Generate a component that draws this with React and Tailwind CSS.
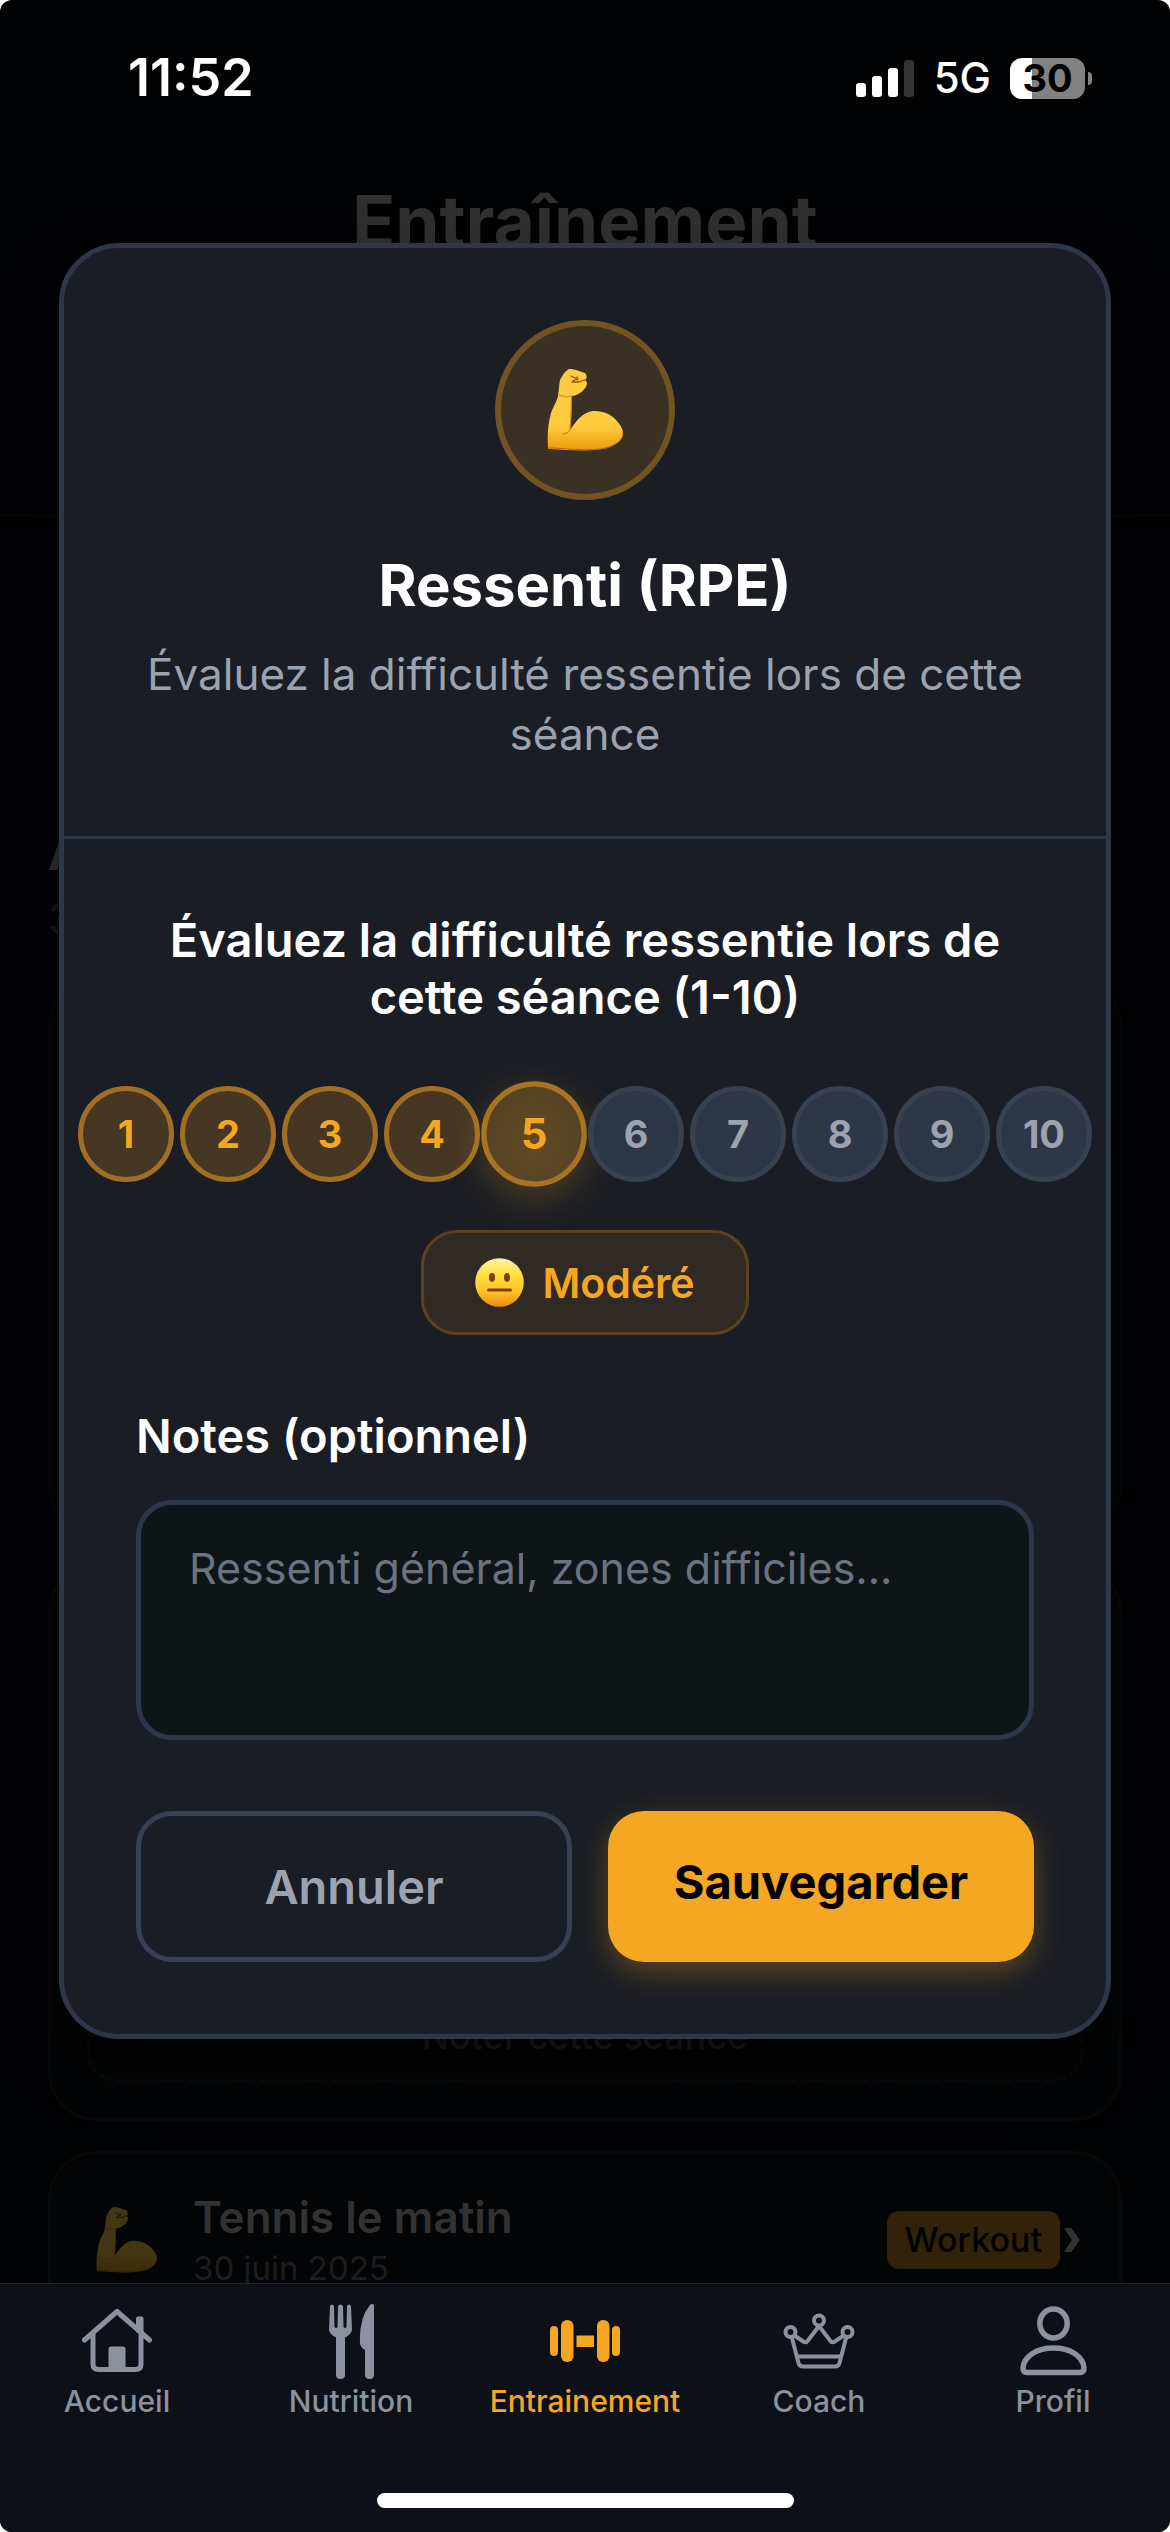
import React, { useState } from "react";

function StatusBar() {
  return (
    <div className="flex h-[156px] items-center justify-between pr-[78px] pl-[128px] text-white">
      <span className="text-[52px] leading-[60px] font-semibold">11:52</span>
      <div className="flex items-center gap-[19px]">
        <svg width="59" height="38" viewBox="0 0 59 38" fill="#fff" aria-hidden="true">
          <rect x="0" y="24" width="10" height="14" rx="3" />
          <rect x="16" y="17" width="10" height="21" rx="3" />
          <rect x="32" y="9" width="10" height="29" rx="3" />
          <rect x="48" y="1" width="10" height="37" rx="3" fill="#343435" />
        </svg>
        <span className="text-[42px] leading-[48px] font-medium">5G</span>
        <div className="flex items-center gap-[3px]">
          <div className="flex h-[41px] w-[75px] items-center justify-center rounded-[12px] bg-linear-to-r from-white from-30% to-[#828282] to-30% text-[38px] leading-[41px] font-bold text-black">
            30
          </div>
          <div className="h-[13px] w-[4px] rounded-r-full bg-[#828282]" />
        </div>
      </div>
    </div>
  );
}

function FlexedArm({ className }) {
  return (
    <svg className={className} viewBox="0 0 76 82" aria-hidden="true">
      <defs>
        <linearGradient id="arm" x1="0" y1="0" x2="0" y2="1">
          <stop offset="0" stopColor="#ffcb45" />
          <stop offset="0.7" stopColor="#ffcc3f" />
          <stop offset="1" stopColor="#e99a0c" />
        </linearGradient>
      </defs>
      <path
        d="M1 79 C0 68 1 54 4 44 C7 36 10 32 11 27 C12 21 12 15 13 11 C15 7 18 2 22 0 C28 -0.5 33 3 38 4 C40 6 40 9 38.500 11 L40 14 C40 18 36 22 33 24 C30 26 27 27 24.500 27 C24.500 38 24 50 23 61 C29 52 36 43 46 42 C60 41 72 50 76 62 C77 71 69 76 59 79 C43 83 20 81 4 80 C2 80 1 80 1 79 Z"
        fill="url(#arm)"
      />
      <path d="M2 79 C18 79 42 83 59 79 C69 76 77 71 76 62" fill="none" stroke="#b86b06" strokeWidth="1" />
      <path d="M24.500 27 C24.500 40 24 50 23 61 C21 64 18 65 15 65" fill="none" stroke="#d48a12" strokeWidth="1.2" />
      <path d="M12 26 C16 28 21 28 25 27" fill="none" stroke="#e09a1c" strokeWidth="1.5" />
      <path d="M24 7 L30 10 L26 12 M30 8 L31 11 M25 13 L32 13 L39 10.500" fill="none" stroke="#955307" strokeWidth="1.3" strokeLinecap="round" strokeLinejoin="round" />
    </svg>
  );
}

function NeutralFace() {
  return (
    <svg className="size-[49px]" viewBox="0 0 49 49" aria-hidden="true">
      <defs>
        <linearGradient id="face" x1="0" y1="0" x2="0" y2="1">
          <stop offset="0" stopColor="#fff5a8" />
          <stop offset="0.35" stopColor="#ffdf3c" />
          <stop offset="0.7" stopColor="#ffc02a" />
          <stop offset="1" stopColor="#f08a0c" />
        </linearGradient>
      </defs>
      <circle cx="24.5" cy="24.5" r="24.3" fill="url(#face)" />
      <ellipse cx="17" cy="19.5" rx="3" ry="4.4" fill="#7a4306" />
      <ellipse cx="32" cy="19.5" rx="3" ry="4.4" fill="#7a4306" />
      <rect x="12" y="30.5" width="25" height="3" rx="1.5" fill="#7a4306" />
    </svg>
  );
}

const icons = {
  home: (
    <svg width="70" height="64" viewBox="0 0 70 64" fill="none" stroke="currentColor" strokeWidth="5" strokeLinecap="round" strokeLinejoin="round" aria-hidden="true">
      <path d="M2.5 31 L35 2.500 L67.500 31" />
      <path d="M11 24 V55 Q11 60.500 16.500 60.500 H53.500 Q59 60.500 59 55 V24" />
      <path d="M54 23 V9.500 Q54 7.500 56 7.500 H59.500 Q61.500 7.500 61.500 9.500 V27 Z" fill="currentColor" stroke="none" />
      <path d="M26.500 61 V40 Q26.500 37.500 29 37.500 H41 Q43.500 37.500 43.500 40 V61 Z" fill="currentColor" stroke="none" />
    </svg>
  ),
  food: (
    <svg width="45" height="75" viewBox="0 0 45 75" fill="currentColor" aria-hidden="true">
      <path d="M1 2 Q3 -1 5 2 L5.500 23 Q7 25 8.500 23 L9 2 Q11.500 -1 14 2 L14.500 23 Q16 25 17.500 23 L18 2 Q20 -1 22 2 L23 26 Q22 31 16 33.500 V71 Q16 75 11.500 75 Q7 75 7 71 V33.500 Q1 31 0 26 Z" />
      <path d="M45 1 V71 Q45 75 40.500 75 Q36 75 36 71 V46 Q31 43 31 39 Q30 14 41 1 Q43 -1 45 1 Z" />
    </svg>
  ),
  dumbbell: (
    <svg width="70" height="42" viewBox="0 0 70 42" fill="currentColor" aria-hidden="true">
      <rect x="0" y="6" width="8" height="30" rx="4" />
      <rect x="11" y="0" width="12.500" height="42" rx="6" />
      <rect x="26.500" y="15.500" width="17.500" height="11.500" />
      <rect x="47" y="0" width="12.500" height="42" rx="6" />
      <rect x="62" y="6" width="8" height="30" rx="4" />
    </svg>
  ),
  crown: (
    <svg width="72" height="56" viewBox="0 0 72 56" fill="none" stroke="currentColor" strokeWidth="4" strokeLinejoin="round" aria-hidden="true">
      <circle cx="7.500" cy="19" r="5" />
      <circle cx="36" cy="7.500" r="5" />
      <circle cx="64.500" cy="19" r="5" />
      <path d="M9 25 L15.500 50 Q16.500 53.500 20 53.500 H52 Q55.500 53.500 56.500 50 L63 25" />
      <path d="M12 23 L21 29 Q23.500 30 25 27.500 L36 13 L47 27.500 Q48.500 30 51 29 L60 23" />
      <path d="M14.500 43.500 H57.500" />
    </svg>
  ),
  person: (
    <svg width="67" height="70" viewBox="0 0 67 70" fill="none" stroke="currentColor" strokeWidth="5.500" aria-hidden="true">
      <ellipse cx="33.500" cy="17.500" rx="13.700" ry="14.500" />
      <path d="M7 66.500 Q3 66.500 3 62 C4 50 17 42 33.500 42 C50 42 63 50 64 62 Q64 66.500 60 66.500 Z" />
    </svg>
  ),
};

const tabs = [
  { label: "Accueil", icon: "home" },
  { label: "Nutrition", icon: "food" },
  { label: "Entrainement", icon: "dumbbell", active: true },
  { label: "Coach", icon: "crown" },
  { label: "Profil", icon: "person" },
];

function TabBar() {
  return (
    <nav className="absolute inset-x-0 bottom-0 border-t border-[#23272d] bg-[#0d1117]">
      <ul className="grid grid-cols-5 pt-[17px]">
        {tabs.map((t) => (
          <li key={t.label}>
            <a
              href="#"
              aria-current={t.active ? "page" : undefined}
              className={
                "flex flex-col items-center text-[30px] leading-[36px] font-medium " +
                (t.active ? "text-[#f5a623]" : "text-[#8b929e]")
              }
            >
              <span className="flex h-[80px] items-center">{icons[t.icon]}</span>
              <span className="mt-[2px]">{t.label}</span>
            </a>
          </li>
        ))}
      </ul>
      <div className="mx-auto mt-[74px] mb-[24px] h-[15px] w-[417px] rounded-full bg-white" />
    </nav>
  );
}

function DimmedPage() {
  return (
    <div className="flex grow flex-col" aria-hidden="true">
      <header className="h-[361px] border-b-3 border-[#090603]">
        <p className="pt-[20px] text-center text-[71px] leading-[90px] font-bold text-[#303030]">Entraînement</p>
      </header>
      <div className="flex flex-col px-12 pt-[306px]">
        <p className="text-[48px] leading-[60px] font-bold text-[#303030]">Activités</p>
        <p className="mt-[12px] text-[42px] leading-[48px] text-[#1a1a1b]">3</p>
        <div className="mt-[34px] flex h-[557px] rounded-[48px] border-3 border-[#060708] bg-[#030405]" />
        <div className="mt-[30px] flex h-[557px] flex-col justify-end rounded-[48px] border-3 border-[#070809] bg-[#030405] p-[36px]">
          <p className="rounded-[30px] border-3 border-dashed border-[#090a0b] py-[19px] text-center text-[36px] leading-[48px] font-medium text-[#1b1c1d]">
            Noter cette séance
          </p>
        </div>
        <div className="mt-[30px] flex h-[240px] items-start gap-[36px] rounded-[48px] border-3 border-[#070809] bg-[#030405] pt-[36px] pr-[38px] pl-[45px]">
          <FlexedArm className="mt-[17px] h-[66px] w-[61px] opacity-25" />
          <div className="grow">
            <p className="text-[44px] leading-[54px] font-semibold text-[#323232]">Tennis le matin</p>
            <p className="text-[33px] leading-[48px] text-[#1c1d1f]">30 juin 2025</p>
          </div>
          <div className="mt-[21px] flex items-center gap-[3px]">
            <span className="rounded-xl bg-[#33220a] px-[18px] text-[34px] leading-[58px] font-medium text-black">Workout</span>
            <svg width="18" height="24" viewBox="0 0 18 24" fill="#323334">
              <path d="M1 0 H8 L17 12 L8 24 H1 L9 12 Z" />
            </svg>
          </div>
        </div>
      </div>
    </div>
  );
}

const levels = [1, 2, 3, 4, 5, 6, 7, 8, 9, 10];

function RpeModal() {
  const [rating, setRating] = useState(5);
  const tone = (n) => {
    if (n === rating)
      return "scale-110 border-[#a87322] bg-radial-[at_50%_60%] from-[#614a24] to-[#524024] text-[#f5a623] shadow-[0_10px_36px_rgba(245,166,35,0.25)]";
    if (n < rating) return "border-[#a06f23] bg-[#463624] text-[#f5a623]";
    return "border-[#374151] bg-[#2d3748] text-[#9ca3af]";
  };
  return (
    <section
      role="dialog"
      aria-labelledby="rpe-title"
      className="absolute inset-x-[59px] top-[243px] rounded-[60px] border-5 border-[#2d3748] bg-[#1a1d24] shadow-[0_30px_60px_rgba(0,0,0,0.5)]"
    >
      <header className="flex flex-col items-center border-b-3 border-[#2d3748] px-[72px] pt-[72px] pb-[72px] text-center">
        <div className="flex size-[180px] items-center justify-center rounded-full border-6 border-[#735323] bg-[#3a3024]">
          <FlexedArm className="h-[82px] w-[76px]" />
        </div>
        <h2 id="rpe-title" className="mt-[49px] text-[58px] leading-[72px] font-bold text-white">
          Ressenti (RPE)
        </h2>
        <p className="mt-[23px] text-[44px] leading-[60px] text-[#9ca3af]">
          Évaluez la difficulté ressentie lors de cette séance
        </p>
      </header>
      <form className="flex flex-col p-[72px]" onSubmit={(e) => e.preventDefault()}>
        <h3 className="text-center text-[47px] leading-[57px] font-semibold text-white">
          Évaluez la difficulté ressentie lors de cette séance (1-10)
        </h3>
        <div className="-mx-[60px] mt-[61px] flex justify-center gap-[6px]">
          {levels.map((n) => (
            <button
              key={n}
              type="button"
              aria-pressed={n === rating}
              onClick={() => setRating(n)}
              className={"relative flex size-[96px] shrink-0 items-center justify-center rounded-full border-5 text-[38px] font-bold " + tone(n)}
            >
              {n}
            </button>
          ))}
        </div>
        <div className="mt-[48px] flex h-[105px] items-center gap-[18px] self-center rounded-[36px] border-3 border-[#5b4322] bg-[#302a24] px-[51px]">
          <NeutralFace />
          <span className="text-[41px] leading-[48px] font-semibold text-[#f5a623]">Modéré</span>
        </div>
        <label htmlFor="notes" className="mt-[72px] text-[47px] leading-[57px] font-semibold text-white">
          Notes (optionnel)
        </label>
        <textarea
          id="notes"
          placeholder="Ressenti général, zones difficiles..."
          className="mt-[36px] block h-[240px] w-full resize-none rounded-[36px] border-5 border-[#2d3748] bg-[#0f1417] px-[48px] py-[36px] text-[43px] leading-[54px] text-white placeholder:text-[#6b7280]"
        />
        <div className="mt-[71px] flex gap-[36px]">
          <button type="button" className="h-[151px] flex-1 basis-[10px] rounded-[36px] border-5 border-[#374151] text-[47px] leading-[57px] font-semibold text-[#9ca3af]">
            Annuler
          </button>
          <button type="submit" className="h-[151px] flex-1 rounded-[36px] bg-[#f5a623] pb-[10px] text-[47px] leading-[57px] font-bold text-black shadow-[0_10px_30px_rgba(245,166,35,0.3)]">
            Sauvegarder
          </button>
        </div>
      </form>
    </section>
  );
}

export default function App() {
  return (
    <div className="bg-white font-[Inter,sans-serif]">
      <main className="relative flex h-screen flex-col overflow-hidden rounded-xl bg-[#010203]">
        <StatusBar />
        <DimmedPage />
        <RpeModal />
        <TabBar />
      </main>
    </div>
  );
}
